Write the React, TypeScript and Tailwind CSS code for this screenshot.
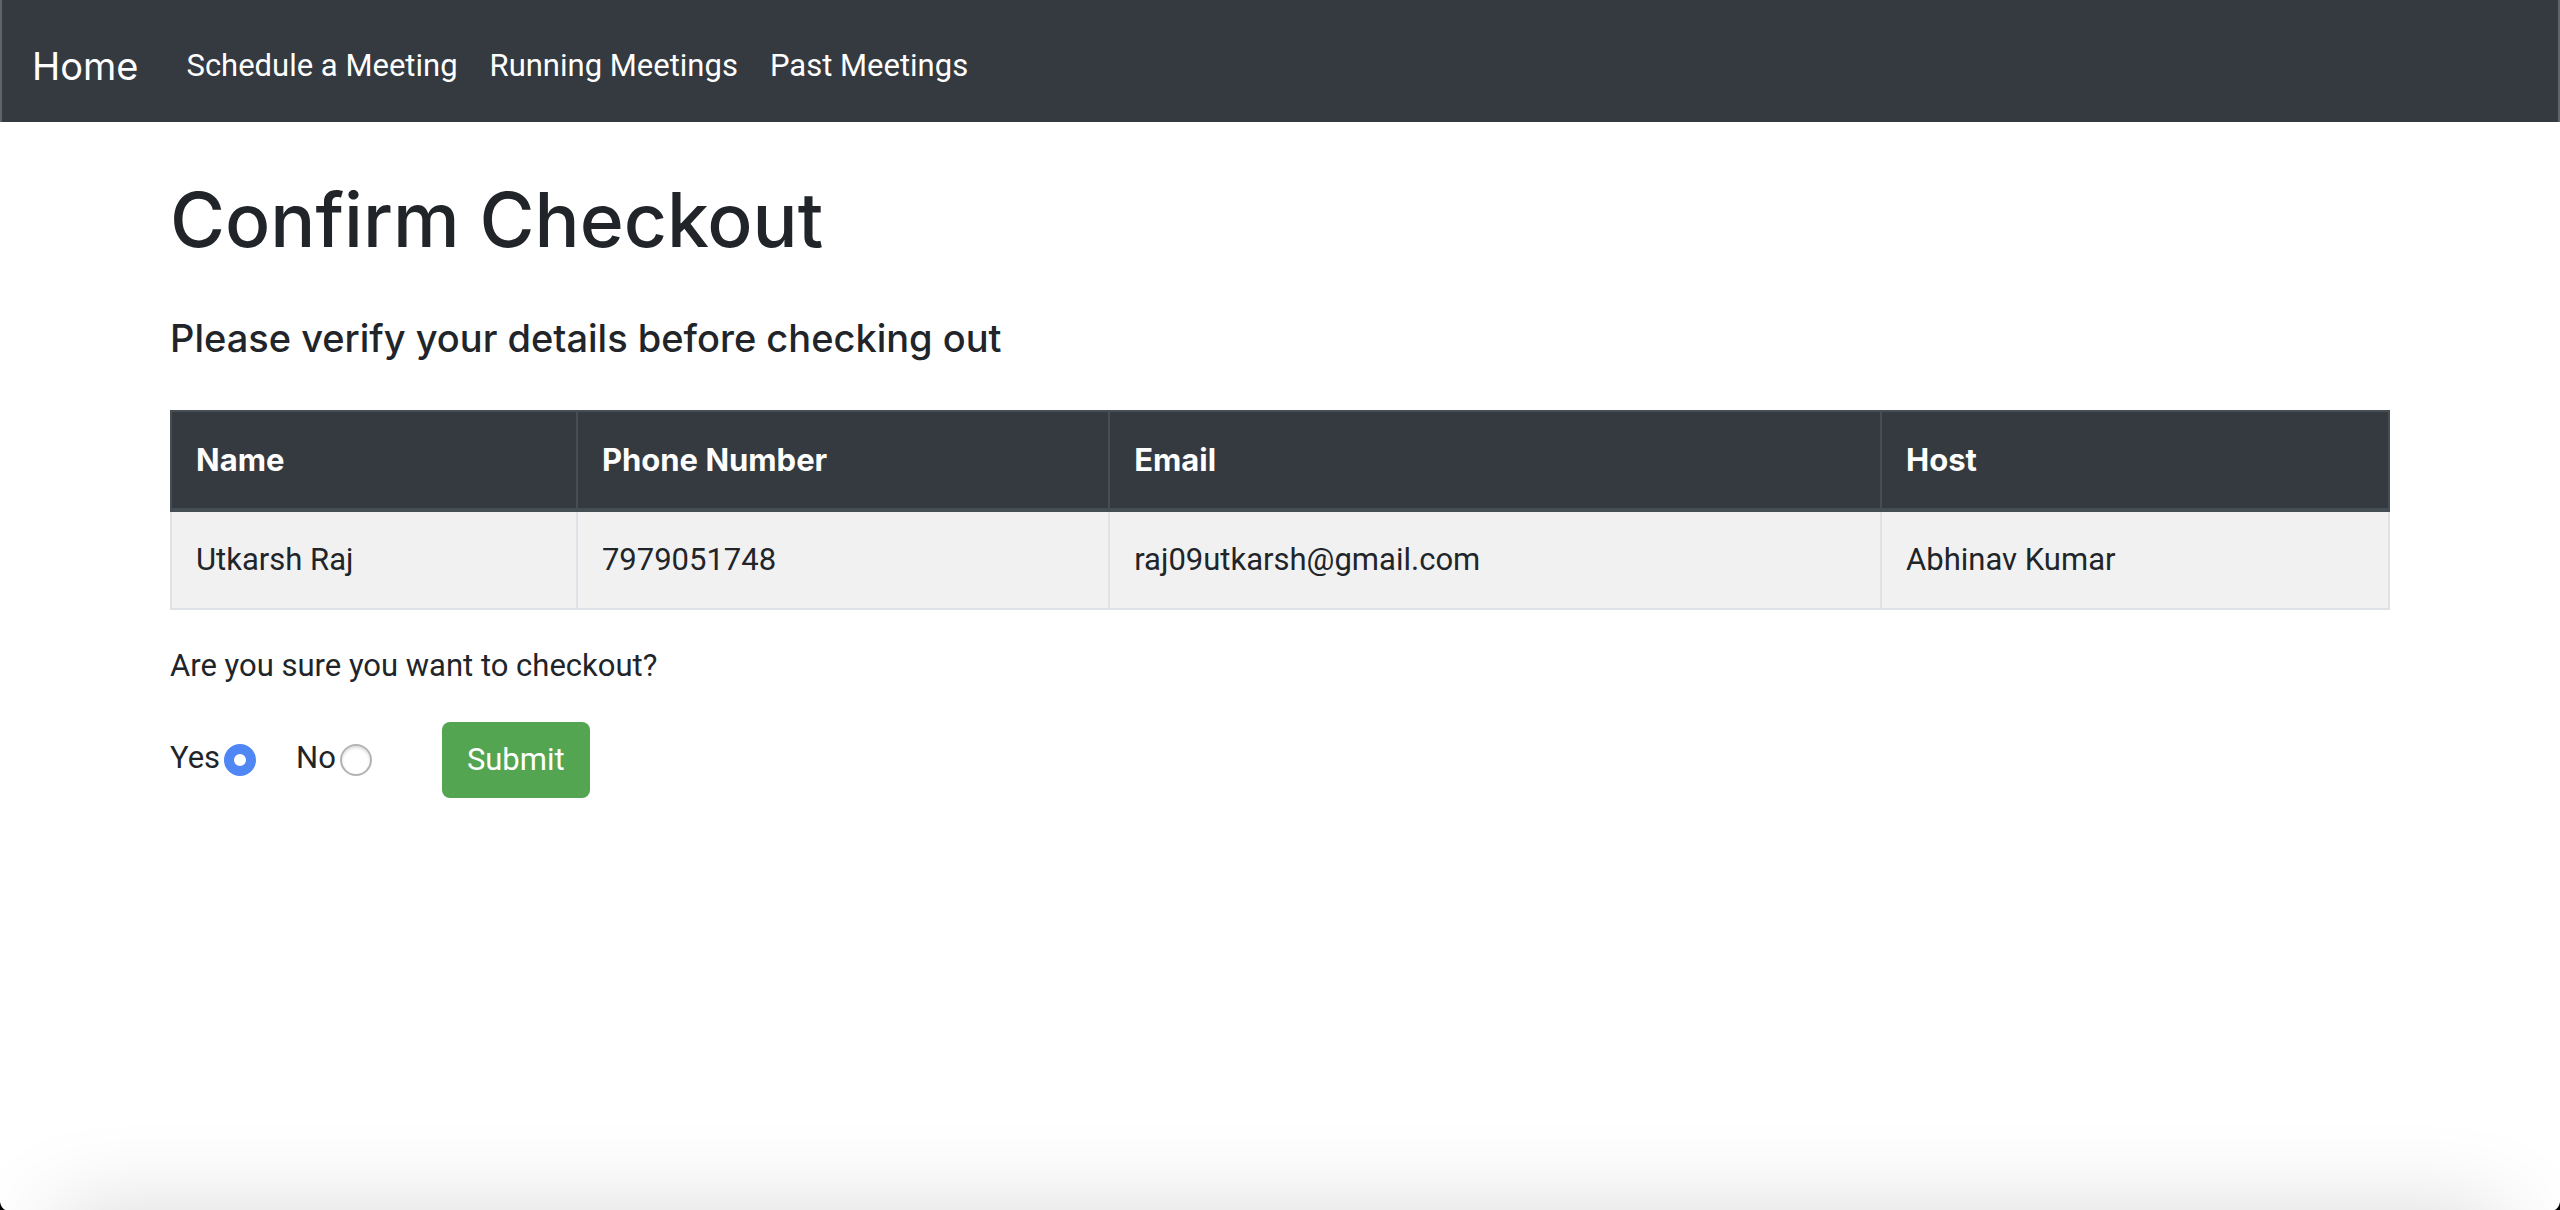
import { useState } from "react";

const links = ["Schedule a Meeting", "Running Meetings", "Past Meetings"];

const columns = [
  { label: "Name", value: "Utkarsh Raj", width: "w-[18.3%]" },
  { label: "Phone Number", value: "7979051748", width: "w-[24%]" },
  { label: "Email", value: "raj09utkarsh@gmail.com", width: "w-[34.8%]" },
  { label: "Host", value: "Abhinav Kumar", width: "w-[22.9%]" },
];

function Navbar() {
  return (
    <nav className="flex items-center border-x-2 border-[#5f6468] bg-[#343a40] px-[30px] pt-[26px] pb-4 text-white">
      <a href="#" className="mr-8 py-[10px] pr-4 font-['Inter',sans-serif] text-[38px] leading-[60px]">
        Home
      </a>
      <ul className="flex gap-8">
        {links.map((link) => (
          <li key={link}>
            <a href="#" className="block py-4">
              {link}
            </a>
          </li>
        ))}
      </ul>
    </nav>
  );
}

function DetailsTable() {
  return (
    <table className="mt-12 w-full table-fixed border-collapse border-2 border-[#dee2e6] text-left">
      <thead className="bg-[#343a40] text-white">
        <tr>
          {columns.map((c) => (
            <th
              key={c.label}
              scope="col"
              className={`${c.width} border-2 border-b-4 border-[#454d55] p-6 font-['Inter',sans-serif] font-bold`}
            >
              {c.label}
            </th>
          ))}
        </tr>
      </thead>
      <tbody>
        <tr className="bg-[#f1f1f1]">
          {columns.map((c) => (
            <td key={c.label} className="border-2 border-[#dee2e6] p-6">
              {c.value}
            </td>
          ))}
        </tr>
      </tbody>
    </table>
  );
}

function Choice(props: { label: string; checked: boolean; onSelect: () => void }) {
  return (
    <label className="flex items-center gap-1">
      {props.label}
      <input
        type="radio"
        name="checkout"
        checked={props.checked}
        onChange={props.onSelect}
        className="mt-1 size-8 appearance-none rounded-full border-2 border-[#b4b4b4] bg-white shadow-[inset_0_2px_3px_#dddddd] checked:border-[10px] checked:border-[#4f87f5] checked:shadow-none"
      />
    </label>
  );
}

function WindowEdge() {
  return (
    <div className="pointer-events-none fixed inset-x-0 bottom-0 h-32 overflow-hidden">
      <div className="absolute inset-x-14 top-full h-40 shadow-[0_0_90px_rgba(0,0,0,0.15)]" />
      <svg className="absolute bottom-0 left-0" width="5" height="8" viewBox="0 0 5 8">
        <path d="M0 0C1 4 2 6 5 8H0Z" fill="#000" />
      </svg>
      <svg className="absolute right-0 bottom-0" width="5" height="8" viewBox="0 0 5 8">
        <path d="M5 0C4 4 3 6 0 8H5Z" fill="#000" />
      </svg>
    </div>
  );
}

export default function App() {
  const [confirmed, setConfirmed] = useState(true);

  return (
    <div className="min-h-screen bg-white font-['Roboto',sans-serif] text-[31px] leading-[48px] text-[#212529]">
      <Navbar />
      <main className="mx-auto max-w-[2280px] px-[30px] pt-[50px]">
        <h1 className="font-['Inter',sans-serif] text-[75px] leading-[96px] font-medium">Confirm Checkout</h1>
        <h2 className="mt-[46px] font-['Inter',sans-serif] text-[38px] leading-[48px] font-medium">
          Please verify your details before checking out
        </h2>
        <DetailsTable />
        <form onSubmit={(e) => e.preventDefault()}>
          <p className="mt-8">Are you sure you want to checkout?</p>
          <div className="mt-8 flex items-start">
            <div className="flex gap-10 pt-3">
              <Choice label="Yes" checked={confirmed} onSelect={() => setConfirmed(true)} />
              <Choice label="No" checked={!confirmed} onSelect={() => setConfirmed(false)} />
            </div>
            <button
              type="submit"
              className="ml-[70px] rounded-lg bg-[#54a551] px-[25px] py-[14px] text-white"
            >
              Submit
            </button>
          </div>
        </form>
      </main>
      <WindowEdge />
    </div>
  );
}
